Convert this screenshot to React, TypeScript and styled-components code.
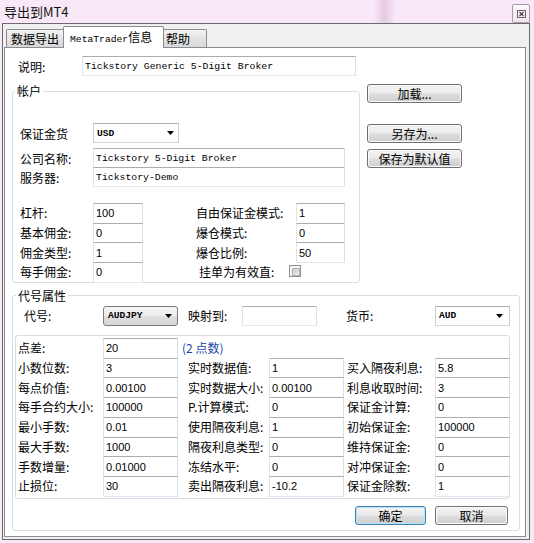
import React from "react";
import styled, { createGlobalStyle, css } from "styled-components";

const CJK = `"Noto Sans CJK SC", "Noto Sans", sans-serif`;
const MONO = `"Liberation Mono", "DejaVu Sans Mono", monospace`;
const SANS = `"Liberation Sans", Arial, sans-serif`;

const Global = createGlobalStyle`
  html, body { margin: 0; padding: 0; }
  body {
    background: #f9e8f7;
    font-family: ${CJK};
    font-size: 12px;
    color: #000;
  }
  * { box-sizing: border-box; }
`;

const Window = styled.div`
  width: 534px;
  height: 543px;
  overflow: hidden;
  background: #f9e8f7;
  display: flex;
  flex-direction: column;
`;

const TitleBar = styled.div`
  height: 23px;
  flex: none;
  display: flex;
  align-items: flex-start;
  justify-content: space-between;
  padding: 0 4px 0 4px;
  background:
    linear-gradient(90deg, transparent 374px, rgba(176, 128, 176, 0.28) 384px, transparent 396px),
    #f9e8f7;
`;

const Title = styled.span`
  font-family: ${CJK};
  font-size: 13px;
  line-height: 23px;
  color: #111;
`;

const CloseButton = styled.div`
  width: 18px;
  height: 19px;
  margin-top: 4px;
  border: 1px solid #a99aa8;
  border-radius: 2px;
  background: linear-gradient(#fdf7fc, #f1e6f0);
  display: flex;
  align-items: center;
  justify-content: center;
`;

const Client = styled.div`
  margin-left: 2px;
  width: 528px;
  height: 517px;
  border: 1px solid #6b6b6b;
  background: #f0f0f0;
  display: flex;
  flex-direction: column;
  padding: 0 3px 2px 1px;
`;

const TabStrip = styled.div`
  height: 23px;
  flex: none;
  display: flex;
  align-items: flex-end;
  padding-left: 2px;
`;

const Tab = styled.div<{ $w: number; $pl: number; $active?: boolean }>`
  flex: none;
  width: ${(p) => p.$w}px;
  padding-left: ${(p) => p.$pl}px;
  border: 1px solid #898c95;
  border-bottom: none;
  border-radius: 2px 2px 0 0;
  white-space: nowrap;
  font-size: 12px;
  ${(p) =>
    p.$active
      ? css`
          height: 22px;
          margin: 0 -1px -1px -1px;
          background: #ffffff;
          z-index: 1;
          line-height: 20px;
        `
      : css`
          height: 18px;
          background: linear-gradient(#f4f4f4, #e3e3e3 50%, #d8d8d8);
          line-height: 18px;
        `}
`;

const TabMono = styled.span`
  font-family: ${MONO};
  font-size: 9.7px;
`;

const Panel = styled.div`
  flex: 1;
  width: 522px;
  border: 1px solid #898c95;
  background: #ffffff;
  padding: 8px 0 0 7px;
  display: flex;
  flex-direction: column;
`;

const TopGrid = styled.div`
  display: grid;
  grid-template-columns: 348px 95px;
  column-gap: 7px;
`;

const Column = styled.div`
  display: flex;
  flex-direction: column;
`;

const Row = styled.div<{ $mt?: number; $pl?: number }>`
  display: flex;
  align-items: center;
  height: 20px;
  flex: none;
  margin-top: ${(p) => p.$mt ?? 0}px;
  padding-left: ${(p) => p.$pl ?? 0}px;
`;

const Label = styled.span<{ $w?: number; $pl?: number; $blue?: boolean }>`
  flex: none;
  width: ${(p) => (p.$w ? `${p.$w}px` : "auto")};
  padding-left: ${(p) => p.$pl ?? 0}px;
  font-family: ${CJK};
  font-size: 12px;
  white-space: nowrap;
  color: ${(p) => (p.$blue ? "#2446a8" : "#000")};
`;

const TextBox = styled.input<{ $w?: number; $mono?: boolean }>`
  flex: none;
  width: ${(p) => (p.$w ? `${p.$w}px` : "100%")};
  height: 20px;
  margin: 0;
  padding: 0 2px;
  border: 1px solid;
  border-color: #abadb3 #dbdfe6 #e3e9ef #e2e3ea;
  border-radius: 0;
  background: #fff;
  color: #000;
  outline: none;
  font-family: ${(p) => (p.$mono ? MONO : SANS)};
  font-size: ${(p) => (p.$mono ? "9.8px" : "11px")};
`;

const StackBox = styled(TextBox)`
  height: calc(100% + 1px);
  align-self: start;
`;

const Combo = styled.div<{ $w: number; $raised?: boolean; $pl: number; $pr: number }>`
  flex: none;
  width: ${(p) => p.$w}px;
  height: 20px;
  display: flex;
  align-items: center;
  justify-content: space-between;
  padding: 0 ${(p) => p.$pr}px 0 ${(p) => p.$pl}px;
  font-family: ${MONO};
  font-weight: bold;
  font-size: 9.6px;
  ${(p) =>
    p.$raised
      ? css`
          border: 1px solid #7a7a7a;
          border-radius: 3px;
          background: linear-gradient(#f6f6f6, #ececec 50%, #dedede 50%, #d6d6d6);
        `
      : css`
          border: 1px solid;
          border-color: #abadb3 #c9ccd3 #d5d8de #c9ccd3;
          background: #fff;
        `}
`;

const GroupBox = styled.fieldset<{ $mt: number; $pad: string }>`
  margin: ${(p) => p.$mt}px 0 0 0;
  min-width: 0;
  padding: ${(p) => p.$pad};
  border: 1px solid #d5dfe5;
  border-radius: 3px;
  display: flex;
  flex-direction: column;
`;

const Legend = styled.legend<{ $ml: number }>`
  margin-left: ${(p) => p.$ml}px;
  padding: 0 2px;
  height: 14px;
  line-height: 14px;
  font-family: ${CJK};
  font-size: 12px;
`;

const ParamGrid = styled.div`
  margin-top: 16px;
  display: grid;
  grid-template-columns: 73px 50px 153px 49px;
  grid-auto-rows: 19.7px;
  align-items: center;
`;

const CheckCell = styled.div`
  grid-column: 3 / span 2;
  display: flex;
  align-items: center;
  padding-left: 56px;
  height: 100%;
`;

const CheckBox = styled.span`
  flex: none;
  width: 12px;
  height: 12px;
  margin-top: -1px;
  border: 1px solid #8f8f8f;
  background: #f4f4f4;
  padding: 2px;
  &::after {
    content: "";
    display: block;
    width: 100%;
    height: 100%;
    background: linear-gradient(135deg, #c9c9c9, #ececec);
    border: 1px solid #b4b4b4;
  }
`;

const ButtonStack = styled.div`
  display: flex;
  flex-direction: column;
  padding-top: 28px;
`;

const Button = styled.button<{ $w?: number; $mt?: number; $default?: boolean }>`
  flex: none;
  width: ${(p) => (p.$w ? `${p.$w}px` : "95px")};
  height: 19px;
  margin: ${(p) => p.$mt ?? 0}px 0 0 0;
  padding: 0;
  border: 1px solid #707070;
  border-radius: 3px;
  background: linear-gradient(#f3f3f3, #ebebeb 48%, #dddddd 52%, #cfcfcf);
  box-shadow: inset 0 0 0 1px #fafafa;
  font-family: ${CJK};
  font-size: 12px;
  line-height: 17px;
  color: #000;
  ${(p) =>
    p.$default &&
    css`
      border-color: #3c7fb1;
      box-shadow: inset 0 0 0 1px #b8e4fa;
    `}
`;

const HeaderRow = styled.div`
  display: flex;
  align-items: center;
  height: 20px;
  margin-top: 3px;
`;

const InnerBox = styled.div`
  margin-top: 9px;
  border: 1px solid #d5dfe5;
  border-radius: 3px;
  padding: 2px 0 2px 0;
  display: grid;
  grid-template-columns: 87px 75px 91px 75px 91px 75px;
  grid-auto-rows: 19.75px;
  align-items: center;
`;

const DialogButtons = styled.div`
  display: flex;
  justify-content: flex-end;
  gap: 9px;
  margin-top: 7px;
  padding-right: 2px;
`;

const Arrow = () => (
  <svg width="7" height="4" viewBox="0 0 7 4">
    <polygon points="0,0 7,0 3.5,4" fill="#000" />
  </svg>
);

const CloseGlyph = () => (
  <svg width="9" height="8" viewBox="0 0 9 8">
    <rect x="0.5" y="0.5" width="8" height="7" fill="none" stroke="#6f626e" />
    <path d="M2.5 2 L6.5 6 M6.5 2 L2.5 6" stroke="#4a3f49" strokeWidth="1.1" />
  </svg>
);

type SymRow = [string, string, string?, string?, string?, string?];

const symbolRows: SymRow[] = [
  ["点差:", "20"],
  ["小数位数:", "3", "实时数据值:", "1", "买入隔夜利息:", "5.8"],
  ["每点价值:", "0.00100", "实时数据大小:", "0.00100", "利息收取时间:", "3"],
  ["每手合约大小:", "100000", "P.计算模式:", "0", "保证金计算:", "0"],
  ["最小手数:", "0.01", "使用隔夜利息:", "1", "初始保证金:", "100000"],
  ["最大手数:", "1000", "隔夜利息类型:", "0", "维持保证金:", "0"],
  ["手数增量:", "0.01000", "冻结水平:", "0", "对冲保证金:", "0"],
  ["止损位:", "30", "卖出隔夜利息:", "-10.2", "保证金除数:", "1"],
];

const accountRows: [string, string, string | null, string | null][] = [
  ["杠杆:", "100", "自由保证金模式:", "1"],
  ["基本佣金:", "0", "爆仓模式:", "0"],
  ["佣金类型:", "1", "爆仓比例:", "50"],
  ["每手佣金:", "0", null, null],
];

export default function App() {
  return (
    <>
      <Global />
      <Window>
        <TitleBar>
          <Title>导出到MT4</Title>
          <CloseButton>
            <CloseGlyph />
          </CloseButton>
        </TitleBar>
        <Client>
          <TabStrip>
            <Tab $w={58} $pl={4}>数据导出</Tab>
            <Tab $w={101} $pl={6} $active>
              <TabMono>MetaTrader</TabMono>信息
            </Tab>
            <Tab $w={44} $pl={2}>帮助</Tab>
          </TabStrip>
          <Panel>
            <TopGrid>
              <Column>
                <Row $pl={6}>
                  <Label $w={64}>说明:</Label>
                  <TextBox $w={274} $mono readOnly defaultValue="Tickstory Generic 5-Digit Broker" />
                </Row>
                <GroupBox $mt={8} $pad="0 14px 0 7px">
                  <Legend $ml={-5}>帐户</Legend>
                  <Row $mt={25}>
                    <Label $w={73}>保证金货</Label>
                    <Combo $w={86} $pl={3} $pr={4}>
                      USD
                      <Arrow />
                    </Combo>
                  </Row>
                  <Row $mt={5}>
                    <Label $w={73}>公司名称:</Label>
                    <TextBox $w={252} $mono readOnly defaultValue="Tickstory 5-Digit Broker" />
                  </Row>
                  <Row $mt={-1}>
                    <Label $w={73}>服务器:</Label>
                    <TextBox $w={252} $mono readOnly defaultValue="Tickstory-Demo" />
                  </Row>
                  <ParamGrid>
                    {accountRows.map(([l1, v1, l2, v2]) => (
                      <React.Fragment key={l1}>
                        <Label>{l1}</Label>
                        <StackBox readOnly defaultValue={v1} />
                        {l2 !== null ? (
                          <>
                            <Label $pl={53}>{l2}</Label>
                            <StackBox readOnly defaultValue={v2 ?? ""} />
                          </>
                        ) : (
                          <CheckCell>
                            <Label $w={90}>挂单为有效直:</Label>
                            <CheckBox />
                          </CheckCell>
                        )}
                      </React.Fragment>
                    ))}
                  </ParamGrid>
                </GroupBox>
              </Column>
              <ButtonStack>
                <Button>加载...</Button>
                <Button $mt={21}>另存为...</Button>
                <Button $mt={6}>保存为默认值</Button>
              </ButtonStack>
            </TopGrid>

            <GroupBox $mt={6} $pad="0 9px 5px 2px" style={{ width: 508 }}>
              <Legend $ml={1}>代号属性</Legend>
              <HeaderRow>
                <Label $w={88} $pl={9}>代号:</Label>
                <Combo $w={75} $pl={4} $pr={5} $raised>
                  AUDJPY
                  <Arrow />
                </Combo>
                <Label $w={64} $pl={10}>映射到:</Label>
                <TextBox $w={75} readOnly defaultValue="" />
                <Label $w={118} $pl={29}>货币:</Label>
                <Combo $w={75} $pl={3} $pr={6}>
                  AUD
                  <Arrow />
                </Combo>
              </HeaderRow>
              <InnerBox>
                {symbolRows.map(([l1, v1, l2, v2, l3, v3], i) => (
                  <React.Fragment key={l1}>
                    <Label $pl={2}>{l1}</Label>
                    <StackBox readOnly defaultValue={v1} />
                    {i === 0 ? (
                      <>
                        <Label $pl={4} $blue>(2 点数)</Label>
                        <span />
                        <span />
                        <span />
                      </>
                    ) : (
                      <>
                        <Label $pl={10}>{l2}</Label>
                        <StackBox readOnly defaultValue={v2} />
                        <Label $pl={3}>{l3}</Label>
                        <StackBox readOnly defaultValue={v3} />
                      </>
                    )}
                  </React.Fragment>
                ))}
              </InnerBox>
              <DialogButtons>
                <Button $w={71} $default>确定</Button>
                <Button $w={73}>取消</Button>
              </DialogButtons>
            </GroupBox>
          </Panel>
        </Client>
      </Window>
    </>
  );
}
